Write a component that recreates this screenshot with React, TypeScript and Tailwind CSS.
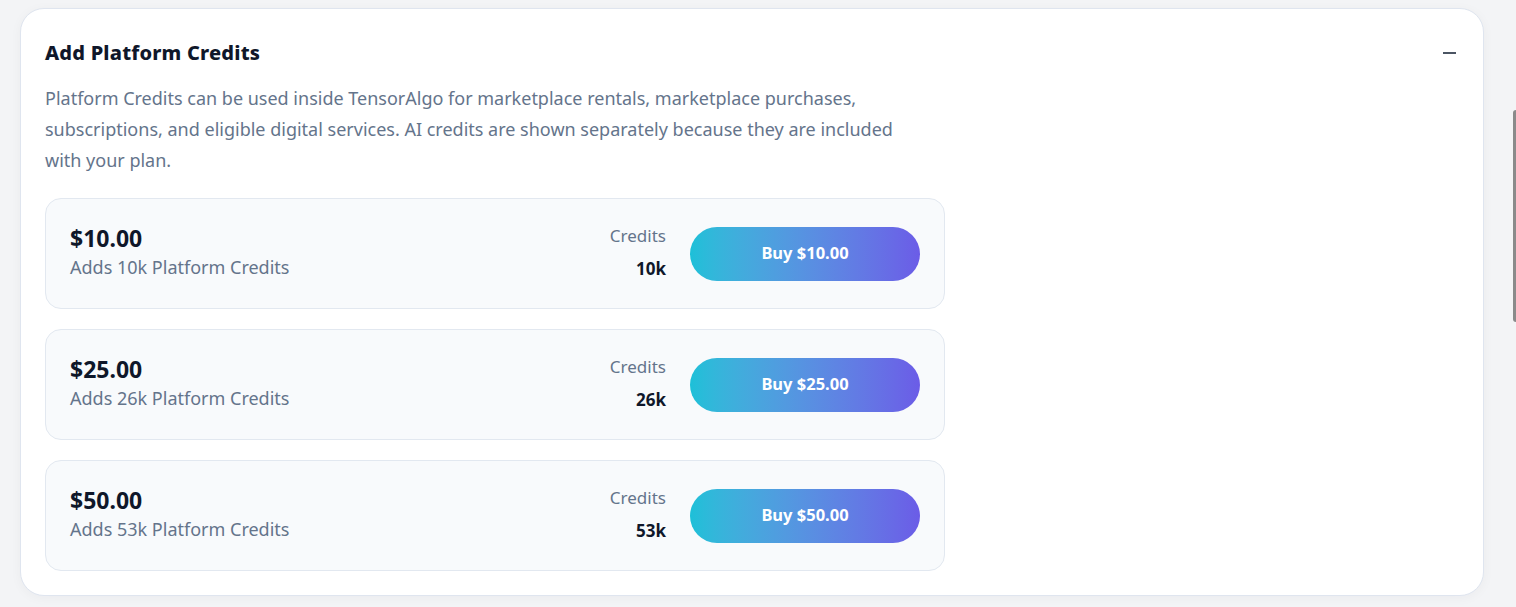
import { FC } from "react";

interface Pack {
  price: string;
  credits: string;
}

const packs: Pack[] = [
  { price: "$10.00", credits: "10k" },
  { price: "$25.00", credits: "26k" },
  { price: "$50.00", credits: "53k" },
];

const PackRow: FC<{ pack: Pack }> = ({ pack }) => (
  <div className="flex items-center justify-between h-[111px] px-[24px] rounded-[16px] border border-[#e2e8f0] bg-[#f8fafc]">
    <div className="flex flex-col pb-[2px]">
      <span className="text-[23px] leading-[28px] font-bold text-[#0f172a]">{pack.price}</span>
      <span className="text-[18px] leading-[30px] text-[#64748b]">
        Adds {pack.credits} Platform Credits
      </span>
    </div>
    <div className="flex items-center gap-[24px]">
      <div className="flex flex-col items-end pt-[3px]">
        <span className="text-[17px] leading-[26px] text-[#64748b]">Credits</span>
        <span className="text-[17px] leading-[39px] font-bold text-[#0f172a]">{pack.credits}</span>
      </div>
      <button className="w-[230px] h-[54px] rounded-full bg-gradient-to-r from-[#1cc0d8] to-[#6b5ce7] text-white text-[16.5px] font-bold">
        Buy {pack.price}
      </button>
    </div>
  </div>
);

export default function App() {
  return (
    <div
      className="relative min-h-[607px] bg-[#f3f4f6] pt-[8px] pl-[20px] pr-[32px] pb-[10px]"
      style={{ fontFamily: '"Noto Sans", "Open Sans", sans-serif' }}
    >
      <section className="rounded-[24px] border border-[#dfe5ef] bg-white px-[24px] pt-[30px] pb-[24px] shadow-[0_2px_12px_rgba(15,23,42,0.04)]">
        <div className="flex items-center justify-between">
          <h2 className="text-[20px] leading-[28px] font-extrabold tracking-[0.2px] text-[#0f172a]">
            Add Platform Credits
          </h2>
          <span className="block w-[13px] h-[2px] bg-[#4b5563] mr-[3px]" />
        </div>
        <p className="mt-[16px] max-w-[870px] text-[18px] leading-[31px] text-[#64748b]">
          Platform Credits can be used inside TensorAlgo for marketplace rentals, marketplace purchases,
          subscriptions, and eligible digital services. AI credits are shown separately because they are
          included with your plan.
        </p>
        <div className="mt-[22px] flex flex-col gap-[20px] w-[900px]">
          {packs.map((p) => (
            <PackRow key={p.price} pack={p} />
          ))}
        </div>
      </section>
      <div className="absolute right-0 top-[110px] w-[3px] h-[212px] rounded-l bg-[#8a8a8a]" />
    </div>
  );
}
